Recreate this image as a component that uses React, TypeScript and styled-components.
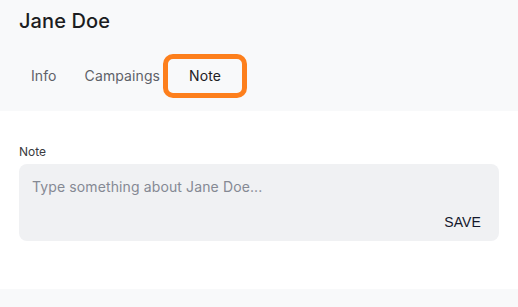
import React from "react";
import styled, { createGlobalStyle } from "styled-components";

const Global = createGlobalStyle`
  html, body { margin: 0; padding: 0; background: #ffffff; }
  body { font-family: Inter, "Noto Sans", sans-serif; }
  * { box-sizing: border-box; }
`;

const Page = styled.div`
  width: 518px;
  height: 307px;
  display: flex;
  flex-direction: column;
  background: #ffffff;
`;

const Header = styled.header`
  height: 111px;
  background: #f8f9fa;
  padding: 9px 19px 0;
  display: flex;
  flex-direction: column;
`;

const Title = styled.h1`
  margin: 0;
  font-size: 20px;
  line-height: 25px;
  font-weight: 500;
  color: #1c1d21;
  letter-spacing: 0.1px;
`;

const Tabs = styled.nav`
  margin-top: 20px;
  padding-left: 12px;
  display: flex;
  align-items: center;
  gap: 28px;
`;

const Tab = styled.button<{ $active?: boolean }>`
  font-family: inherit;
  font-size: 14px;
  line-height: 20px;
  letter-spacing: 0.1px;
  border: none;
  background: transparent;
  padding: 12px 0;
  color: ${(p) => (p.$active ? "#1f2024" : "#5e6168")};
  cursor: pointer;
`;

const ActiveTab = styled(Tab)`
  border: 5px solid #fd7f1c;
  border-radius: 10px;
  padding: 7px 0;
  width: 84px;
  height: 44px;
  margin-left: -25px;
`;

const Body = styled.main`
  flex: 1;
  padding: 33px 19px 0;
  display: flex;
  flex-direction: column;
`;

const Label = styled.label`
  font-size: 12px;
  line-height: 16px;
  color: #3a3b40;
  margin-bottom: 4px;
`;

const NoteBox = styled.div`
  height: 77px;
  background: #f0f1f3;
  border-radius: 8px;
  padding: 13px 18px 11px 13px;
  display: flex;
  flex-direction: column;
`;

const Placeholder = styled.div`
  font-size: 14px;
  line-height: 20px;
  letter-spacing: 0.12px;
  color: #858993;
`;

const SaveRow = styled.div`
  margin-top: auto;
  display: flex;
  justify-content: flex-end;
`;

const SaveButton = styled.button`
  font-family: "Liberation Sans", Arial, sans-serif;
  font-size: 14px;
  line-height: 16px;
  background: transparent;
  border: none;
  padding: 0;
  color: #14182c;
  letter-spacing: 0.1px;
`;

const Footer = styled.footer`
  height: 18px;
  background: #f8f9fa;
`;

export default function App() {
  return (
    <>
      <Global />
      <Page>
        <Header>
          <Title>Jane Doe</Title>
          <Tabs>
            <Tab>Info</Tab>
            <Tab>Campaings</Tab>
            <ActiveTab $active>Note</ActiveTab>
          </Tabs>
        </Header>
        <Body>
          <Label>Note</Label>
          <NoteBox>
            <Placeholder>Type something about Jane Doe...</Placeholder>
            <SaveRow>
              <SaveButton>SAVE</SaveButton>
            </SaveRow>
          </NoteBox>
        </Body>
        <Footer />
      </Page>
    </>
  );
}
